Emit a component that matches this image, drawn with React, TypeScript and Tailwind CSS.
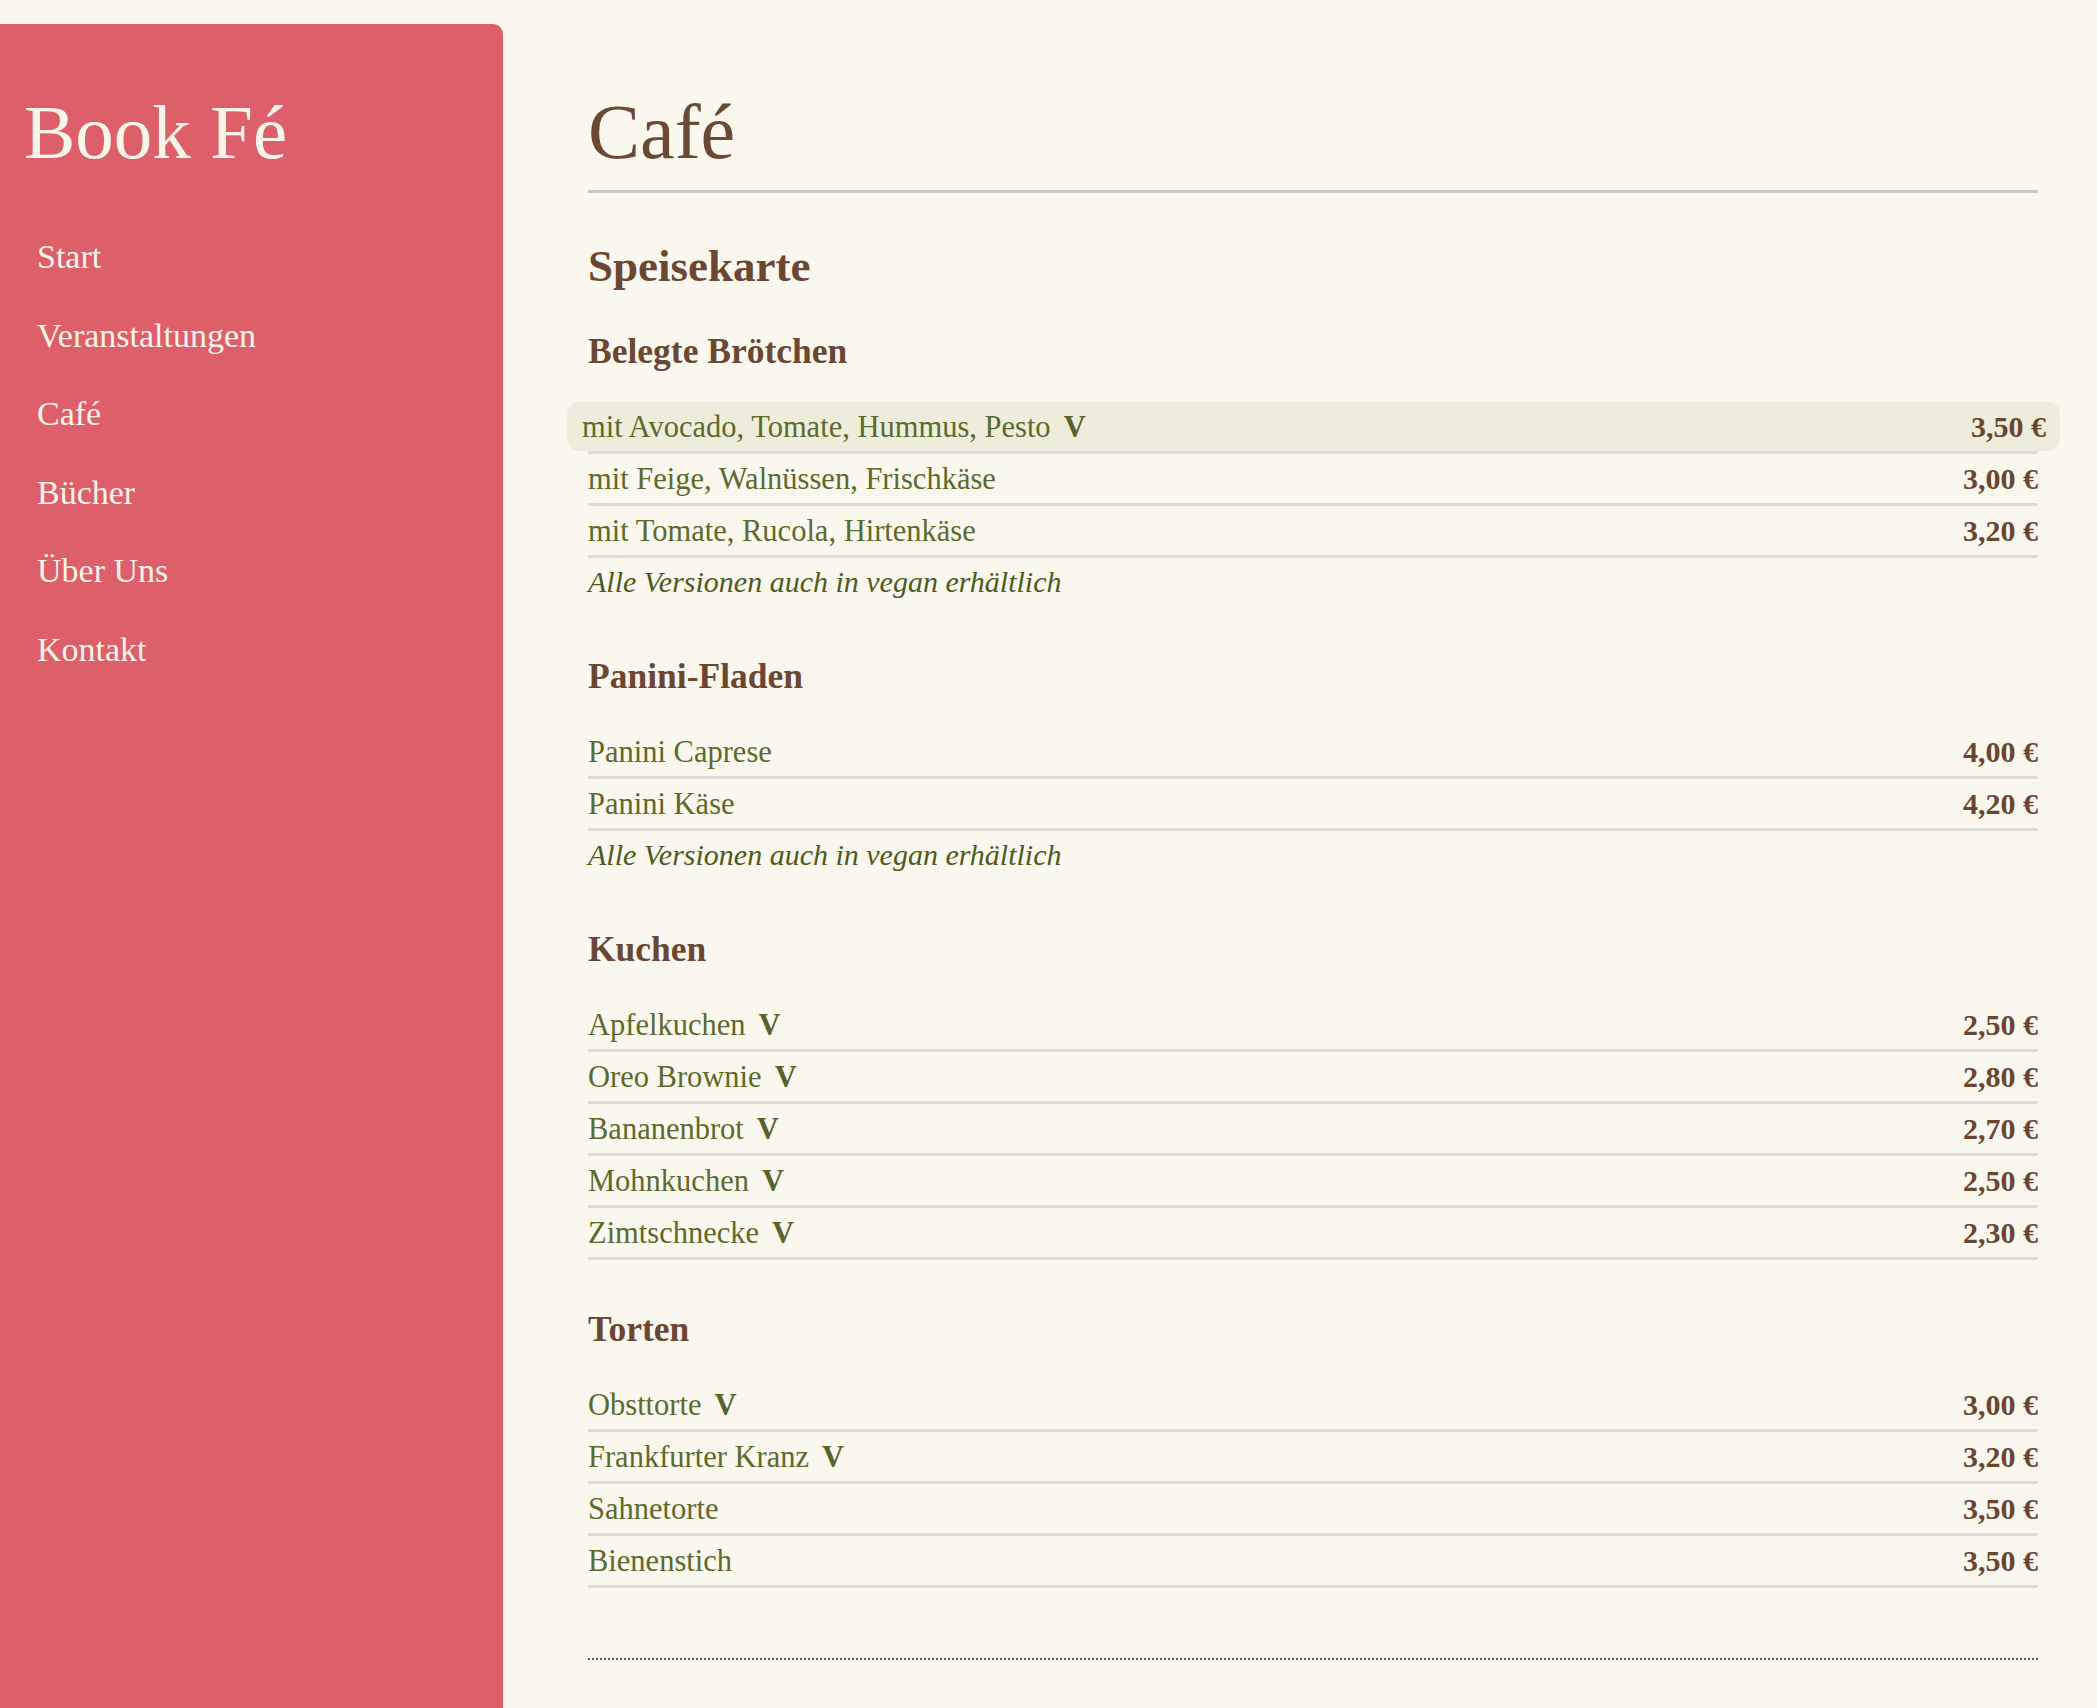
import React from 'react';

type Item = { name: string; vegan?: boolean; price: string };
type Section = { title: string; items: Item[]; note?: string };

const nav = ['Start', 'Veranstaltungen', 'Café', 'Bücher', 'Über Uns', 'Kontakt'];

const menu: Section[] = [
    {
        title: 'Belegte Brötchen',
        items: [
            { name: 'mit Avocado, Tomate, Hummus, Pesto', vegan: true, price: '3,50 €' },
            { name: 'mit Feige, Walnüssen, Frischkäse', price: '3,00 €' },
            { name: 'mit Tomate, Rucola, Hirtenkäse', price: '3,20 €' },
        ],
        note: 'Alle Versionen auch in vegan erhältlich',
    },
    {
        title: 'Panini-Fladen',
        items: [
            { name: 'Panini Caprese', price: '4,00 €' },
            { name: 'Panini Käse', price: '4,20 €' },
        ],
        note: 'Alle Versionen auch in vegan erhältlich',
    },
    {
        title: 'Kuchen',
        items: [
            { name: 'Apfelkuchen', vegan: true, price: '2,50 €' },
            { name: 'Oreo Brownie', vegan: true, price: '2,80 €' },
            { name: 'Bananenbrot', vegan: true, price: '2,70 €' },
            { name: 'Mohnkuchen', vegan: true, price: '2,50 €' },
            { name: 'Zimtschnecke', vegan: true, price: '2,30 €' },
        ],
    },
    {
        title: 'Torten',
        items: [
            { name: 'Obsttorte', vegan: true, price: '3,00 €' },
            { name: 'Frankfurter Kranz', vegan: true, price: '3,20 €' },
            { name: 'Sahnetorte', price: '3,50 €' },
            { name: 'Bienenstich', price: '3,50 €' },
        ],
    },
];

function MenuRow({ item, active }: { item: Item; active?: boolean }) {
    return (
        <div>
            <div
                className={`flex items-baseline justify-between h-[49px] leading-[49px] ${
                    active ? 'bg-[#eeeddb] rounded-xl -ml-[21px] -mr-[22px] pl-[15px] pr-[14px]' : ''
                }`}
            >
                <span className="text-[30.5px] text-[#5c6a2c]">
                    {item.name}
                    {item.vegan && <strong className="ml-[13px] font-bold text-[#56632a]">V</strong>}
                </span>
                <span className="text-[30px] font-bold text-[#6a4631] [font-variant-numeric:oldstyle-nums]">{item.price}</span>
            </div>
            <div className="h-[3px] rounded-full bg-[#dddbd7]" />
        </div>
    );
}

export default function App() {
    return (
        <div className="flex min-h-screen bg-[#faf7ef] font-['Liberation_Serif',serif]">
            <aside className="w-[503px] shrink-0 mt-[24px] bg-[#dc5f6a] rounded-tr-[10px] pl-[24px]">
                <h1 className="mt-[63px] text-[77px] leading-[90px] text-[#faf5ea]">Book Fé</h1>
                <nav className="mt-[41px] pl-[13px]">
                    {nav.map((n) => (
                        <a key={n} href="#" className="block h-[78.5px] leading-[78.5px] text-[34px] text-[#fbf4ea]">
                            {n}
                        </a>
                    ))}
                </nav>
            </aside>

            <main className="flex-1 pl-[85px] pr-[59px] pt-[89px] pb-[40px]">
                <h1 className="text-[78px] leading-[86px] text-[#6b4a35] pb-[15px] border-b-[3px] border-[#cbc9c3]">Café</h1>
                <h2 className="mt-[49px] text-[45px] leading-[48px] font-bold text-[#6b4733]">Speisekarte</h2>

                <div className="mt-[41px]">
                    {menu.map((s, i) => (
                        <section key={s.title} className={i === 0 ? '' : s.title === 'Torten' ? 'mt-[49px]' : 'mt-[56px]'}>
                            <h3 className="text-[35.5px] leading-[40px] font-bold text-[#6b4733]">{s.title}</h3>
                            <div className="mt-[31px]">
                                {s.items.map((it, j) => (
                                    <MenuRow key={it.name} item={it} active={i === 0 && j === 0} />
                                ))}
                            </div>
                            {s.note && (
                                <p className="mt-[6px] text-[30px] leading-[36px] italic text-[#4c5b1c]">{s.note}</p>
                            )}
                        </section>
                    ))}
                </div>

                <div className="mt-[70px] border-t-2 border-dotted border-[#59602e]" />
            </main>
        </div>
    );
}
